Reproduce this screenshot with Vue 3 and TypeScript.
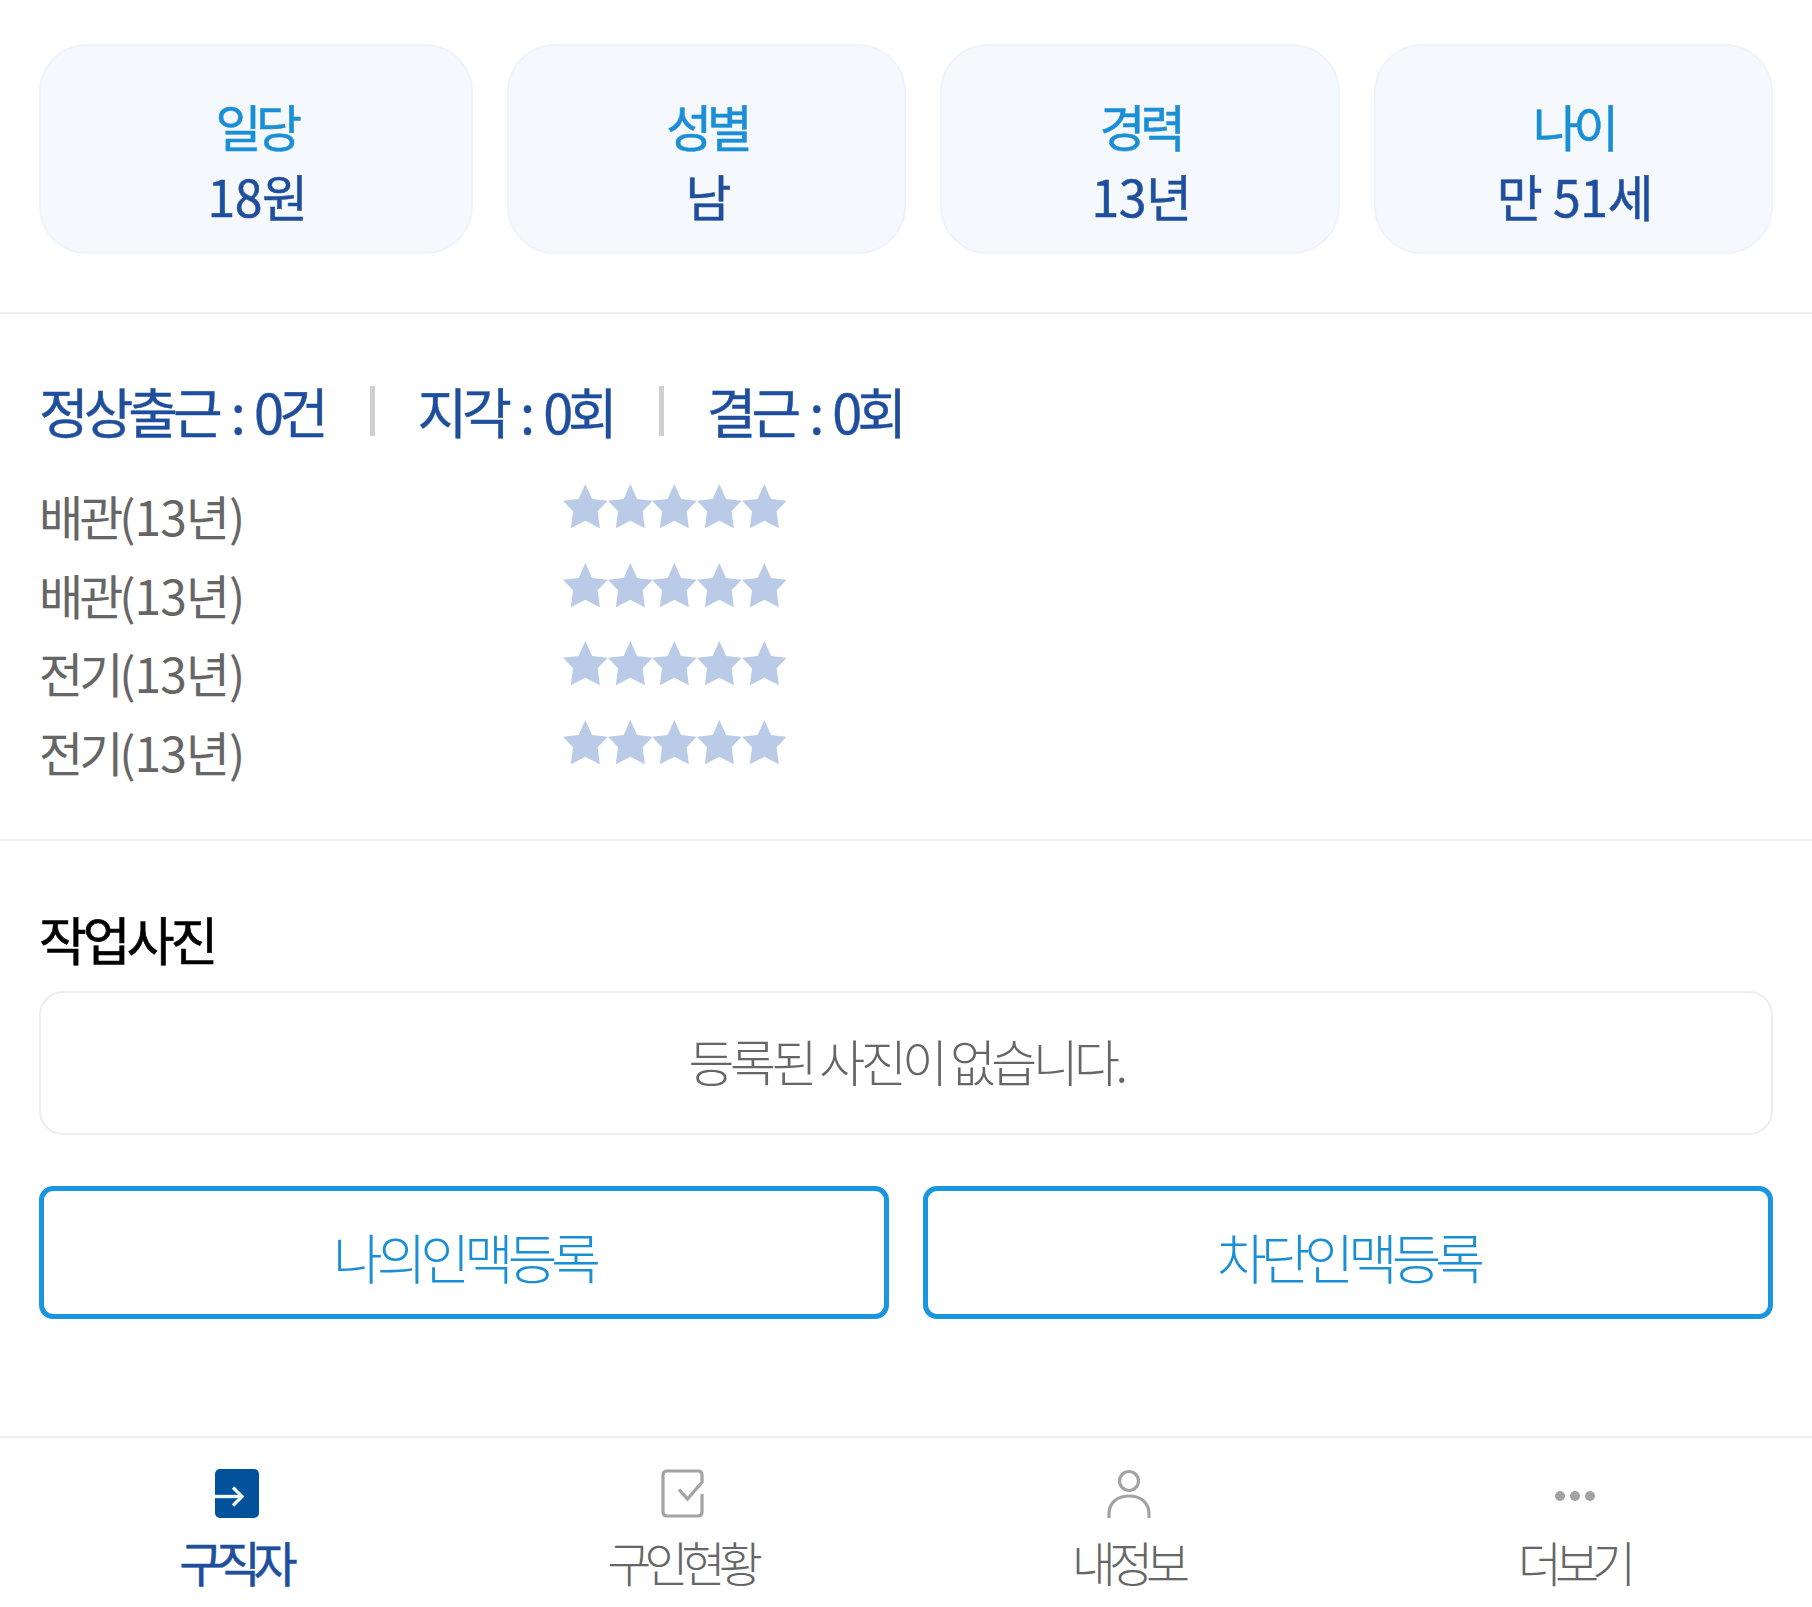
<script setup lang="ts">
interface Card { label: string; value: string }
const cards: Card[] = [
  { label: '일당', value: '18원' },
  { label: '성별', value: '남' },
  { label: '경력', value: '13년' },
  { label: '나이', value: '만 51세' },
]
const stats: string[] = ['정상출근 : 0건', '지각 : 0회', '결근 : 0회']
const skills: { name: string; years: string }[] = [
  { name: '배관', years: '(13년)' },
  { name: '배관', years: '(13년)' },
  { name: '전기', years: '(13년)' },
  { name: '전기', years: '(13년)' },
]
const tabs: { key: string; label: string; active?: boolean }[] = [
  { key: 'seeker', label: '구직자', active: true },
  { key: 'status', label: '구인현황' },
  { key: 'me', label: '내정보' },
  { key: 'more', label: '더보기' },
]
</script>

<template>
  <div class="page">
    <section class="cards">
      <div v-for="c in cards" :key="c.label" class="card">
        <div class="card-label">{{ c.label }}</div>
        <div class="card-value">{{ c.value }}</div>
      </div>
    </section>

    <section class="record">
      <div class="stats">
        <template v-for="(s, i) in stats" :key="s">
          <span v-if="i > 0" class="sep"></span>
          <span class="stat">{{ s }}</span>
        </template>
      </div>
      <div class="skills">
        <div v-for="(s, i) in skills" :key="i" class="skill">
          <span class="skill-name">{{ s.name }}<span class="skill-years">{{ s.years }}</span></span>
          <span class="stars">
            <svg v-for="n in 5" :key="n" class="star" viewBox="0 0 24 24">
              <path d="M12 0 L15.6 8 L24 9 L18.6 14.600 L19.800 23.800 L12 19.800 L4.200 23.800 L5.400 14.600 L0 9 L8.400 8 Z" fill="#b9cbe6" />
            </svg>
          </span>
        </div>
      </div>
    </section>

    <section class="photos">
      <h2 class="title">작업사진</h2>
      <div class="empty">등록된 사진이 없습니다.</div>
      <div class="buttons">
        <button class="btn">나의인맥등록</button>
        <button class="btn">차단인맥등록</button>
      </div>
    </section>

    <nav class="tabs">
      <div v-for="t in tabs" :key="t.key" class="tab" :class="{ active: t.active }">
        <svg class="tab-icon" viewBox="0 0 44 50">
          <template v-if="t.key === 'seeker'">
            <rect x="0" y="0" width="44" height="49" rx="5" fill="#01519b" />
            <path d="M0 27.5 H27" stroke="#eef5fb" stroke-width="3.4" fill="none" />
            <path d="M18 18.500 L27 27.500 L18 36.500" stroke="#eef5fb" stroke-width="3.4" fill="none" />
          </template>
          <template v-else-if="t.key === 'status'">
            <path d="M41 12 V6 Q41 2 37 2 H6 Q2 2 2 6 V43 Q2 47 6 47 H37 Q41 47 41 43 V25" stroke="#a3a3a3" stroke-width="3.2" fill="none" />
            <path d="M18 20.500 L26.500 30 L42 12" stroke="#a3a3a3" stroke-width="3.2" fill="none" />
          </template>
          <template v-else-if="t.key === 'me'">
            <circle cx="22" cy="12" r="9.500" stroke="#a3a3a3" stroke-width="3.2" fill="none" />
            <path d="M2 49 V45 C2 33 11 27 22 27 C33 27 42 33 42 45 V49" stroke="#a3a3a3" stroke-width="3.200" fill="none" />
          </template>
          <template v-else>
            <circle cx="7" cy="27" r="5" fill="#a3a3a3" />
            <circle cx="22" cy="27" r="5" fill="#a3a3a3" />
            <circle cx="37" cy="27" r="5" fill="#a3a3a3" />
          </template>
        </svg>
        <span class="tab-label">{{ t.label }}</span>
      </div>
    </nav>
  </div>
</template>

<style>
html, body { margin: 0; background: #fff; }
</style>

<style scoped>
.page {
  width: 1812px;
  height: 1607px;
  display: flex;
  flex-direction: column;
  overflow: hidden;
  background: #fff;
  font-family: "Noto Sans CJK KR", "Noto Sans", sans-serif;
  box-sizing: border-box;
}
.cards {
  display: grid;
  grid-template-columns: 434px 1fr 1fr 1fr;
  gap: 34px;
  padding: 44px 39px 58px 39px;
  border-bottom: 2px solid #eeeeee;
}
.card {
  height: 210px;
  box-sizing: border-box;
  padding-top: 21px;
  border: 2px solid #eff4fb;
  border-radius: 48px;
  background: #f5f9fe;
  display: flex;
  flex-direction: column;
  align-items: center;
  justify-content: center;
}
.card-label {
  font-size: 50px;
  font-weight: 400;
  line-height: 70px;
  color: #1a8fd6;
  letter-spacing: -5.5px;
  -webkit-text-stroke: 0.5px #1a8fd6;
}
.card-value {
  padding-left: 3px;
  font-size: 50px;
  font-weight: 400;
  line-height: 70px;
  color: #1f4f9c;
  letter-spacing: -0.5px;
  -webkit-text-stroke: 0.5px #1f4f9c;
}
.record {
  height: 527px;
  box-sizing: border-box;
  padding: 62px 39px 0;
  border-bottom: 2px solid #eeeeee;
}
.stats {
  display: flex;
  align-items: center;
  height: 70px;
}
.stat {
  font-size: 54px;
  font-weight: 400;
  line-height: 70px;
  color: #1f4f9c;
  letter-spacing: -5px;
  word-spacing: 6px;
  -webkit-text-stroke: 0.4px #1f4f9c;
}
.sep {
  width: 5px;
  height: 50px;
  background: #cfcfcf;
  margin: 0 43px 0 46px;
}
.skills {
  margin-top: 30px;
}
.skill {
  height: 78.6px;
  display: flex;
  align-items: center;
}
.skill-name {
  width: 522px;
  font-size: 48px;
  font-weight: 400;
  line-height: 78px;
  color: #666666;
  letter-spacing: -4px;
}
.skill-years {
  letter-spacing: -1px;
}
.stars {
  display: flex;
  margin-top: -18px;
  margin-left: 2px;
}
.star {
  width: 44.700px;
  height: 44.700px;
  display: block;
}
.photos {
  height: 597px;
  box-sizing: border-box;
  padding: 59px 39px 0;
  border-bottom: 2px solid #eeeeee;
}
.title {
  margin: 0;
  font-size: 52px;
  font-weight: 400;
  line-height: 78px;
  color: #000;
  letter-spacing: -4px;
  -webkit-text-stroke: 0.6px #000;
}
.empty {
  margin-top: 13px;
  height: 144px;
  box-sizing: border-box;
  border: 2px solid #eeeeee;
  border-radius: 24px;
  padding-bottom: 6px;
  display: flex;
  align-items: center;
  justify-content: center;
  font-size: 50px;
  font-weight: 300;
  color: #666666;
  letter-spacing: -4.6px;
}
.buttons {
  margin-top: 51px;
  display: grid;
  grid-template-columns: 1fr 1fr;
  gap: 34px;
}
.btn {
  height: 133px;
  box-sizing: border-box;
  border: 5px solid #1a96e0;
  border-radius: 14px;
  background: #fff;
  font-family: inherit;
  font-size: 54px;
  font-weight: 300;
  color: #1a8fd6;
  letter-spacing: -6px;
  padding: 8px 0 0;
}
.tabs {
  display: grid;
  grid-template-columns: repeat(4, 1fr);
  padding: 31px 14px 0;
}
.tab {
  display: flex;
  flex-direction: column;
  align-items: center;
}
.tab-icon {
  width: 44px;
  height: 50px;
  display: block;
}
.tab-label {
  margin-top: 7px;
  padding-right: 3px;
  font-size: 48px;
  font-weight: 300;
  line-height: 70px;
  color: #666666;
  letter-spacing: -7px;
}
.tab.active .tab-label {
  padding-right: 4px;
  font-weight: 400;
  color: #1f4f9c;
  -webkit-text-stroke: 0.5px #1f4f9c;
}
</style>
